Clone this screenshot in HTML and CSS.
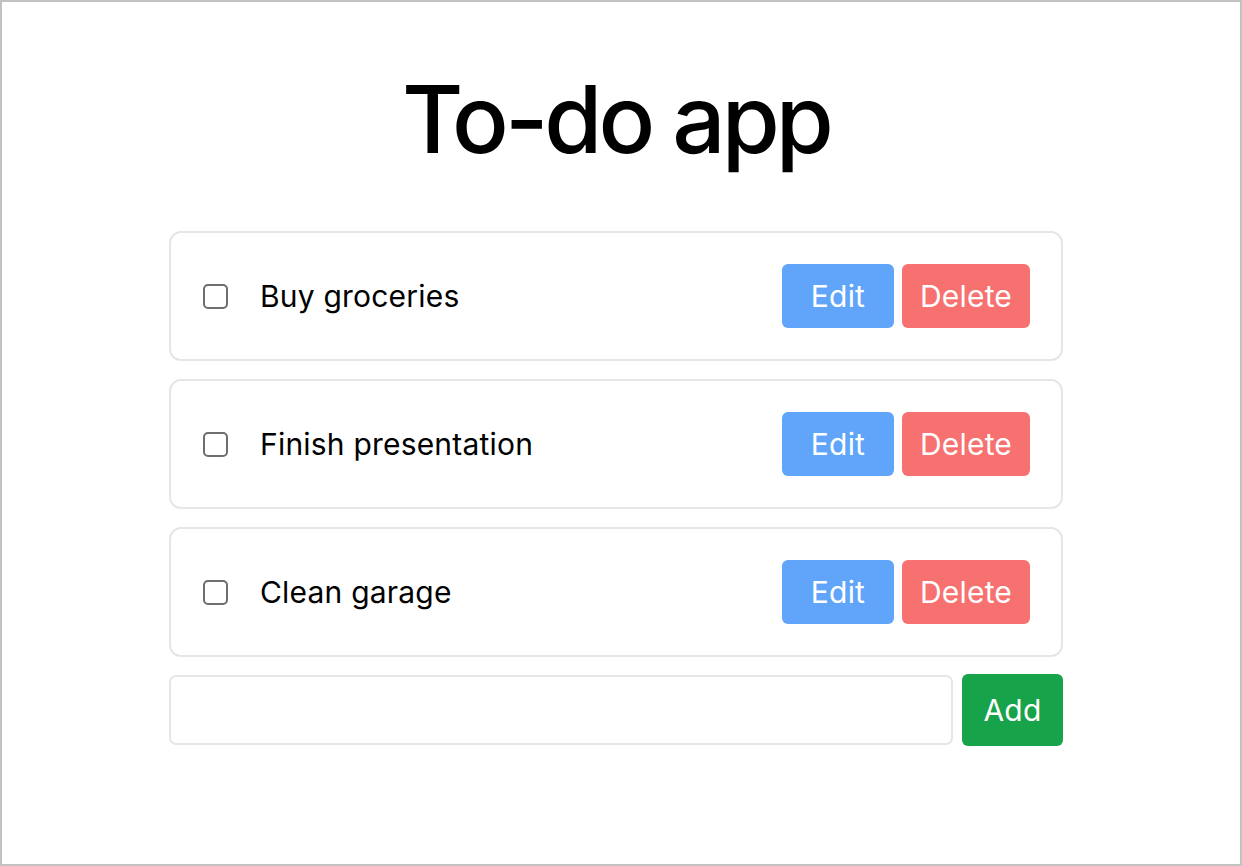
FILE: index.html
```html
<!DOCTYPE html>
<html lang="en">
<head>
<meta charset="utf-8">
<title>To-do app</title>
<link rel="stylesheet" href="styles.css">
</head>
<body>
<div class="frame">
  <main class="app">
    <h1 class="title">To-do app</h1>
    <ul class="list">
      <li class="card">
        <input type="checkbox" class="check">
        <span class="label">Buy groceries</span>
        <div class="actions">
          <button class="btn btn-edit">Edit</button>
          <button class="btn btn-delete">Delete</button>
        </div>
      </li>
      <li class="card">
        <input type="checkbox" class="check">
        <span class="label">Finish presentation</span>
        <div class="actions">
          <button class="btn btn-edit">Edit</button>
          <button class="btn btn-delete">Delete</button>
        </div>
      </li>
      <li class="card">
        <input type="checkbox" class="check">
        <span class="label">Clean garage</span>
        <div class="actions">
          <button class="btn btn-edit">Edit</button>
          <button class="btn btn-delete">Delete</button>
        </div>
      </li>
    </ul>
    <form class="add-row">
      <input type="text" class="add-input">
      <button type="button" class="btn btn-add">Add</button>
    </form>
  </main>
</div>
</body>
</html>
```

FILE: styles.css
```css
* { box-sizing: border-box; }
html, body { margin: 0; padding: 0; }
body {
  font-family: Inter, "Noto Sans", "Liberation Sans", sans-serif;
  color: #000;
  background: #fff;
}
.frame {
  width: 1242px;
  height: 866px;
  border: 2px solid #c2c2c2;
  padding-top: 70px;
}
.app {
  width: 894px;
  margin-left: 167px;
}
.title {
  margin: 0;
  font-size: 94px;
  line-height: 94px;
  font-weight: 500;
  text-align: center;
  letter-spacing: -4px;
}
.list {
  list-style: none;
  margin: 65px 0 0 0;
  padding: 0;
  display: flex;
  flex-direction: column;
  gap: 18px;
}
.card {
  display: flex;
  align-items: center;
  height: 130px;
  padding: 0 31px 0 32px;
  border: 2px solid #e6e6ea;
  border-radius: 12px;
}
.check {
  appearance: none;
  -webkit-appearance: none;
  margin: 0 32px 0 0;
  width: 25px;
  height: 25px;
  border: 2px solid #6e6e6e;
  border-radius: 5px;
  background: #fff;
  flex: none;
}
.label {
  font-size: 30px;
  letter-spacing: 0.2px;
  flex: 1;
}
.actions {
  display: flex;
  gap: 8px;
}
.btn {
  font-family: inherit;
  font-size: 30px;
  letter-spacing: 0.2px;
  font-weight: 400;
  color: #fff;
  border: none;
  border-radius: 6px;
  height: 64px;
  padding: 0;
  cursor: pointer;
}
.btn-edit { width: 112px; background: #60a5fa; }
.btn-delete { width: 128px; background: #f87171; }
.add-row {
  display: flex;
  align-items: center;
  gap: 9px;
  margin: 17px 0 0 0;
}
.add-input {
  flex: 1;
  height: 70px;
  border: 2px solid #e6e6ea;
  border-radius: 7px;
  font-family: inherit;
  font-size: 30px;
  padding: 0 16px;
}
.btn-add {
  width: 101px;
  height: 72px;
  background: #16a34a;
}
```
